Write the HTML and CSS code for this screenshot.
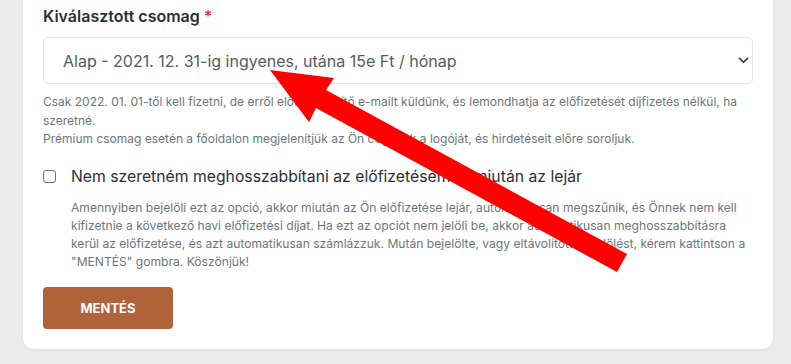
FILE: index.html
```html
<!DOCTYPE html>
<html lang="hu">
<head>
<meta charset="utf-8">
<title>Csomag</title>
<link rel="stylesheet" href="styles.css">
</head>
<body>
<main class="page">
  <section class="card">
    <label class="field-label" for="pkg">Kiválasztott csomag <span class="req">*</span></label>
    <div class="select-wrap">
      <select id="pkg" class="select">
        <option>Alap - 2021. 12. 31-ig ingyenes, utána 15e Ft / hónap</option>
      </select>
      <svg class="chevron" width="12" height="8" viewBox="0 0 12 8"><path d="M1.5 1.5 L6 6 L10.5 1.5" fill="none" stroke="#343a40" stroke-width="2" stroke-linecap="round" stroke-linejoin="round"/></svg>
    </div>
    <p class="help">Csak 2022. 01. 01-től kell fizetni, de erről előtte értesítő e-mailt küldünk, és lemondhatja az előfizetését díjfizetés nélkül, ha szeretné.<br>Prémium csomag esetén a főoldalon megjelenítjük az Ön cégének a logóját, és hirdetéseit előre soroljuk.</p>
    <div class="check-row">
      <input type="checkbox" id="nr" class="check">
      <label for="nr" class="check-label">Nem szeretném meghosszabbítani az előfizetésemet, miután az lejár</label>
    </div>
    <p class="desc">Amennyiben bejelöli ezt az opció, akkor miután az Ön előfizetése lejár, automatikusan megszűnik, és Önnek nem kell kifizetnie a következő havi előfizetési díjat. Ha ezt az opciót nem jelöli be, akkor automatikusan meghosszabbításra kerül az előfizetése, és azt automatikusan számlázzuk. Mután bejelölte, vagy eltávolította a jelölést, kérem kattintson a "MENTÉS" gombra. Köszönjük!</p>
    <button class="btn" type="button">MENTÉS</button>
  </section>
</main>
<svg class="arrow" width="791" height="364" viewBox="0 0 791 364"><polygon points="270,70 334,78 326,90 627,254 617,272 316,108 309,122" fill="#ff0000"/></svg>
</body>
</html>
```
FILE: styles.css
```css
html, body {
  margin: 0;
  padding: 0;
}
body {
  background: #ebebeb;
  font-family: Inter, "Noto Sans", "Liberation Sans", sans-serif;
  color: #212529;
  height: 364px;
  overflow: hidden;
  position: relative;
}
.page {
  padding: 0 18px 0 23px;
}
.card {
  background: #fff;
  margin-top: -20px;
  padding: 25px 20px 20px 20px;
  border-radius: 0 0 10px 10px;
  box-shadow: 0 1px 3px rgba(0,0,0,0.08);
  display: flex;
  flex-direction: column;
  align-items: flex-start;
}
.field-label {
  font-size: 16px;
  font-weight: 600;
  line-height: 22px;
  color: #2b2f33;
}
.req {
  color: #dc3545;
}
.select-wrap {
  position: relative;
  align-self: stretch;
  margin-top: 10px;
}
.select {
  appearance: none;
  -webkit-appearance: none;
  width: 100%;
  height: 47px;
  box-sizing: border-box;
  border: 1px solid #e3e6e9;
  border-radius: 5px;
  background: #fff;
  padding: 0 40px 0 19px;
  font-family: inherit;
  font-size: 16px;
  color: #555a5f;
}
.chevron {
  position: absolute;
  right: 4px;
  top: 20px;
  width: 11px;
  height: 7px;
}
.help {
  margin: 9px 0 0;
  font-size: 12px;
  line-height: 18.5px;
  color: #6c757d;
}
.check-row {
  display: flex;
  align-items: center;
  margin-top: 16px;
}
.check {
  appearance: none;
  -webkit-appearance: none;
  width: 13px;
  height: 13px;
  margin: 0 15px 0 0;
  border: 1px solid #6f7478;
  border-radius: 3px;
  background: #fff;
  box-sizing: border-box;
}
.check-label {
  font-size: 15.75px;
  line-height: 24px;
  color: #2b2f33;
}
.desc {
  margin: 10px 5px 0 28px;
  font-size: 12.1px;
  line-height: 18px;
  color: #6c757d;
}
.btn {
  margin-top: 16px;
  width: 130px;
  height: 42px;
  border: 0;
  border-radius: 4px;
  background: #b0623a;
  color: #fff;
  font-family: inherit;
  font-size: 13px;
  font-weight: 700;
}
.arrow {
  position: absolute;
  left: 0;
  top: 0;
  pointer-events: none;
}
```
